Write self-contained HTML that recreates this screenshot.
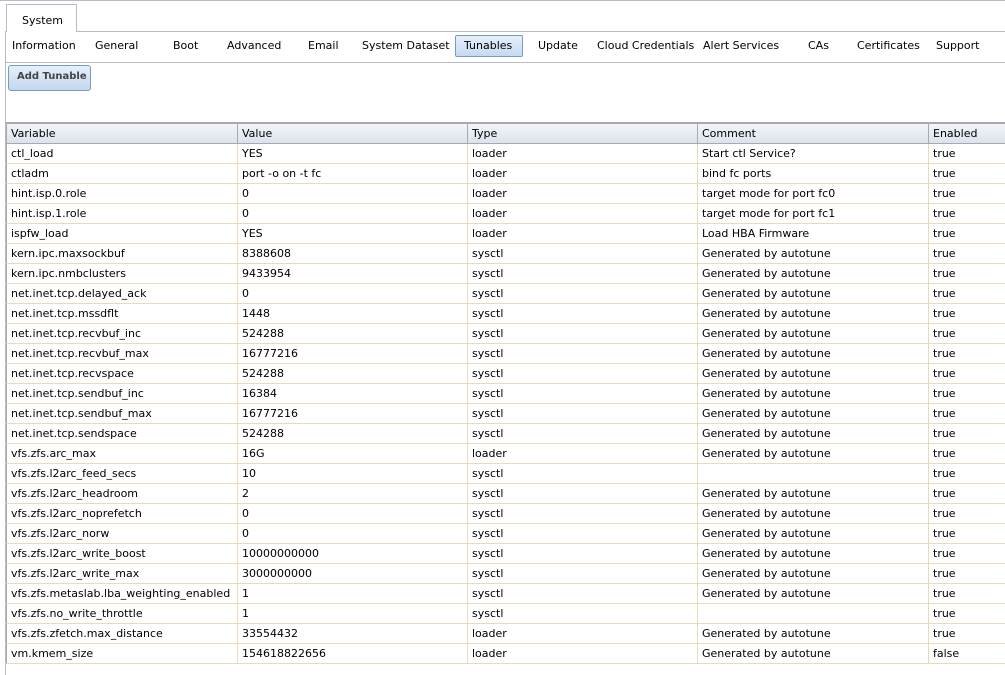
<!DOCTYPE html>
<html><head><meta charset="utf-8"><style>
body{margin:0;width:1005px;height:675px;overflow:hidden;background:#fff;font-family:"DejaVu Sans",Verdana,sans-serif;font-size:11px;color:#000;position:relative}
.a{position:absolute;white-space:nowrap}
.tab{left:6px;top:4px;width:69px;height:27px;border:1px solid #b5bcc7;border-bottom:none;background:#fff;}
.tab span{position:absolute;left:15px;top:9px}
.topline{left:0;top:0;width:1005px;height:1px;background:#b5bcc7}
.subnav{left:5px;top:31px;width:1000px;height:30px;border-top:1px solid #b5bcc7;border-bottom:1px solid #b5bcc7;border-left:1px solid #b5bcc7}
.sel{left:455px;top:35px;width:66px;height:20px;border:1px solid #769dc0;border-radius:2px;background:linear-gradient(#e6f0fb,#c4daf1)}
.btn{left:8px;top:65px;width:81px;height:24px;border:1px solid #769dc0;border-radius:3px;background:linear-gradient(#e6f0fb,#c2d8ef);font-weight:bold;color:#444;font-size:10px}
.vl{left:5px;top:61px;width:1px;height:614px;background:#b5bcc7}
table{position:absolute;left:6px;top:122px;border-collapse:collapse;table-layout:fixed;width:1010px}
th{height:19px;background:linear-gradient(#f2f5f9,#dbe3ec);border:1px solid #a9a9a9;border-top:2px solid #a9a9a9;text-align:left;font-weight:normal;padding:0 4px}
td{height:19px;border:1px solid #ead9bd;border-left:1px solid #ead9bd;padding:0 4px;white-space:nowrap;overflow:hidden}
td:first-child{border-left:1px solid #a9a9a9}
</style></head><body>
<div class="a topline"></div>
<div class="a subnav"></div>
<div class="a tab"><span>System</span></div>
<div class="a sel"></div>
<div class="a" style="left:12px;top:39px">Information</div>
<div class="a" style="left:95px;top:39px">General</div>
<div class="a" style="left:173px;top:39px">Boot</div>
<div class="a" style="left:227px;top:39px">Advanced</div>
<div class="a" style="left:308px;top:39px">Email</div>
<div class="a" style="left:362px;top:39px">System Dataset</div>
<div class="a" style="left:464px;top:39px">Tunables</div>
<div class="a" style="left:538px;top:39px">Update</div>
<div class="a" style="left:597px;top:39px">Cloud Credentials</div>
<div class="a" style="left:703px;top:39px">Alert Services</div>
<div class="a" style="left:808px;top:39px">CAs</div>
<div class="a" style="left:857px;top:39px">Certificates</div>
<div class="a" style="left:936px;top:39px">Support</div>
<div class="a btn"><span style="position:absolute;left:8px;top:5px">Add Tunable</span></div>
<div class="a vl"></div>
<table>
<colgroup><col style="width:231px"><col style="width:230px"><col style="width:230px"><col style="width:231px"><col style="width:88px"></colgroup>
<tr><th>Variable</th><th>Value</th><th>Type</th><th>Comment</th><th>Enabled</th></tr>
<tr><td>ctl_load</td><td>YES</td><td>loader</td><td>Start ctl Service?</td><td>true</td></tr>
<tr><td>ctladm</td><td>port -o on -t fc</td><td>loader</td><td>bind fc ports</td><td>true</td></tr>
<tr><td>hint.isp.0.role</td><td>0</td><td>loader</td><td>target mode for port fc0</td><td>true</td></tr>
<tr><td>hint.isp.1.role</td><td>0</td><td>loader</td><td>target mode for port fc1</td><td>true</td></tr>
<tr><td>ispfw_load</td><td>YES</td><td>loader</td><td>Load HBA Firmware</td><td>true</td></tr>
<tr><td>kern.ipc.maxsockbuf</td><td>8388608</td><td>sysctl</td><td>Generated by autotune</td><td>true</td></tr>
<tr><td>kern.ipc.nmbclusters</td><td>9433954</td><td>sysctl</td><td>Generated by autotune</td><td>true</td></tr>
<tr><td>net.inet.tcp.delayed_ack</td><td>0</td><td>sysctl</td><td>Generated by autotune</td><td>true</td></tr>
<tr><td>net.inet.tcp.mssdflt</td><td>1448</td><td>sysctl</td><td>Generated by autotune</td><td>true</td></tr>
<tr><td>net.inet.tcp.recvbuf_inc</td><td>524288</td><td>sysctl</td><td>Generated by autotune</td><td>true</td></tr>
<tr><td>net.inet.tcp.recvbuf_max</td><td>16777216</td><td>sysctl</td><td>Generated by autotune</td><td>true</td></tr>
<tr><td>net.inet.tcp.recvspace</td><td>524288</td><td>sysctl</td><td>Generated by autotune</td><td>true</td></tr>
<tr><td>net.inet.tcp.sendbuf_inc</td><td>16384</td><td>sysctl</td><td>Generated by autotune</td><td>true</td></tr>
<tr><td>net.inet.tcp.sendbuf_max</td><td>16777216</td><td>sysctl</td><td>Generated by autotune</td><td>true</td></tr>
<tr><td>net.inet.tcp.sendspace</td><td>524288</td><td>sysctl</td><td>Generated by autotune</td><td>true</td></tr>
<tr><td>vfs.zfs.arc_max</td><td>16G</td><td>loader</td><td>Generated by autotune</td><td>true</td></tr>
<tr><td>vfs.zfs.l2arc_feed_secs</td><td>10</td><td>sysctl</td><td></td><td>true</td></tr>
<tr><td>vfs.zfs.l2arc_headroom</td><td>2</td><td>sysctl</td><td>Generated by autotune</td><td>true</td></tr>
<tr><td>vfs.zfs.l2arc_noprefetch</td><td>0</td><td>sysctl</td><td>Generated by autotune</td><td>true</td></tr>
<tr><td>vfs.zfs.l2arc_norw</td><td>0</td><td>sysctl</td><td>Generated by autotune</td><td>true</td></tr>
<tr><td>vfs.zfs.l2arc_write_boost</td><td>10000000000</td><td>sysctl</td><td>Generated by autotune</td><td>true</td></tr>
<tr><td>vfs.zfs.l2arc_write_max</td><td>3000000000</td><td>sysctl</td><td>Generated by autotune</td><td>true</td></tr>
<tr><td>vfs.zfs.metaslab.lba_weighting_enabled</td><td>1</td><td>sysctl</td><td>Generated by autotune</td><td>true</td></tr>
<tr><td>vfs.zfs.no_write_throttle</td><td>1</td><td>sysctl</td><td></td><td>true</td></tr>
<tr><td>vfs.zfs.zfetch.max_distance</td><td>33554432</td><td>loader</td><td>Generated by autotune</td><td>true</td></tr>
<tr><td>vm.kmem_size</td><td>154618822656</td><td>loader</td><td>Generated by autotune</td><td>false</td></tr>
</table>
</body></html>
